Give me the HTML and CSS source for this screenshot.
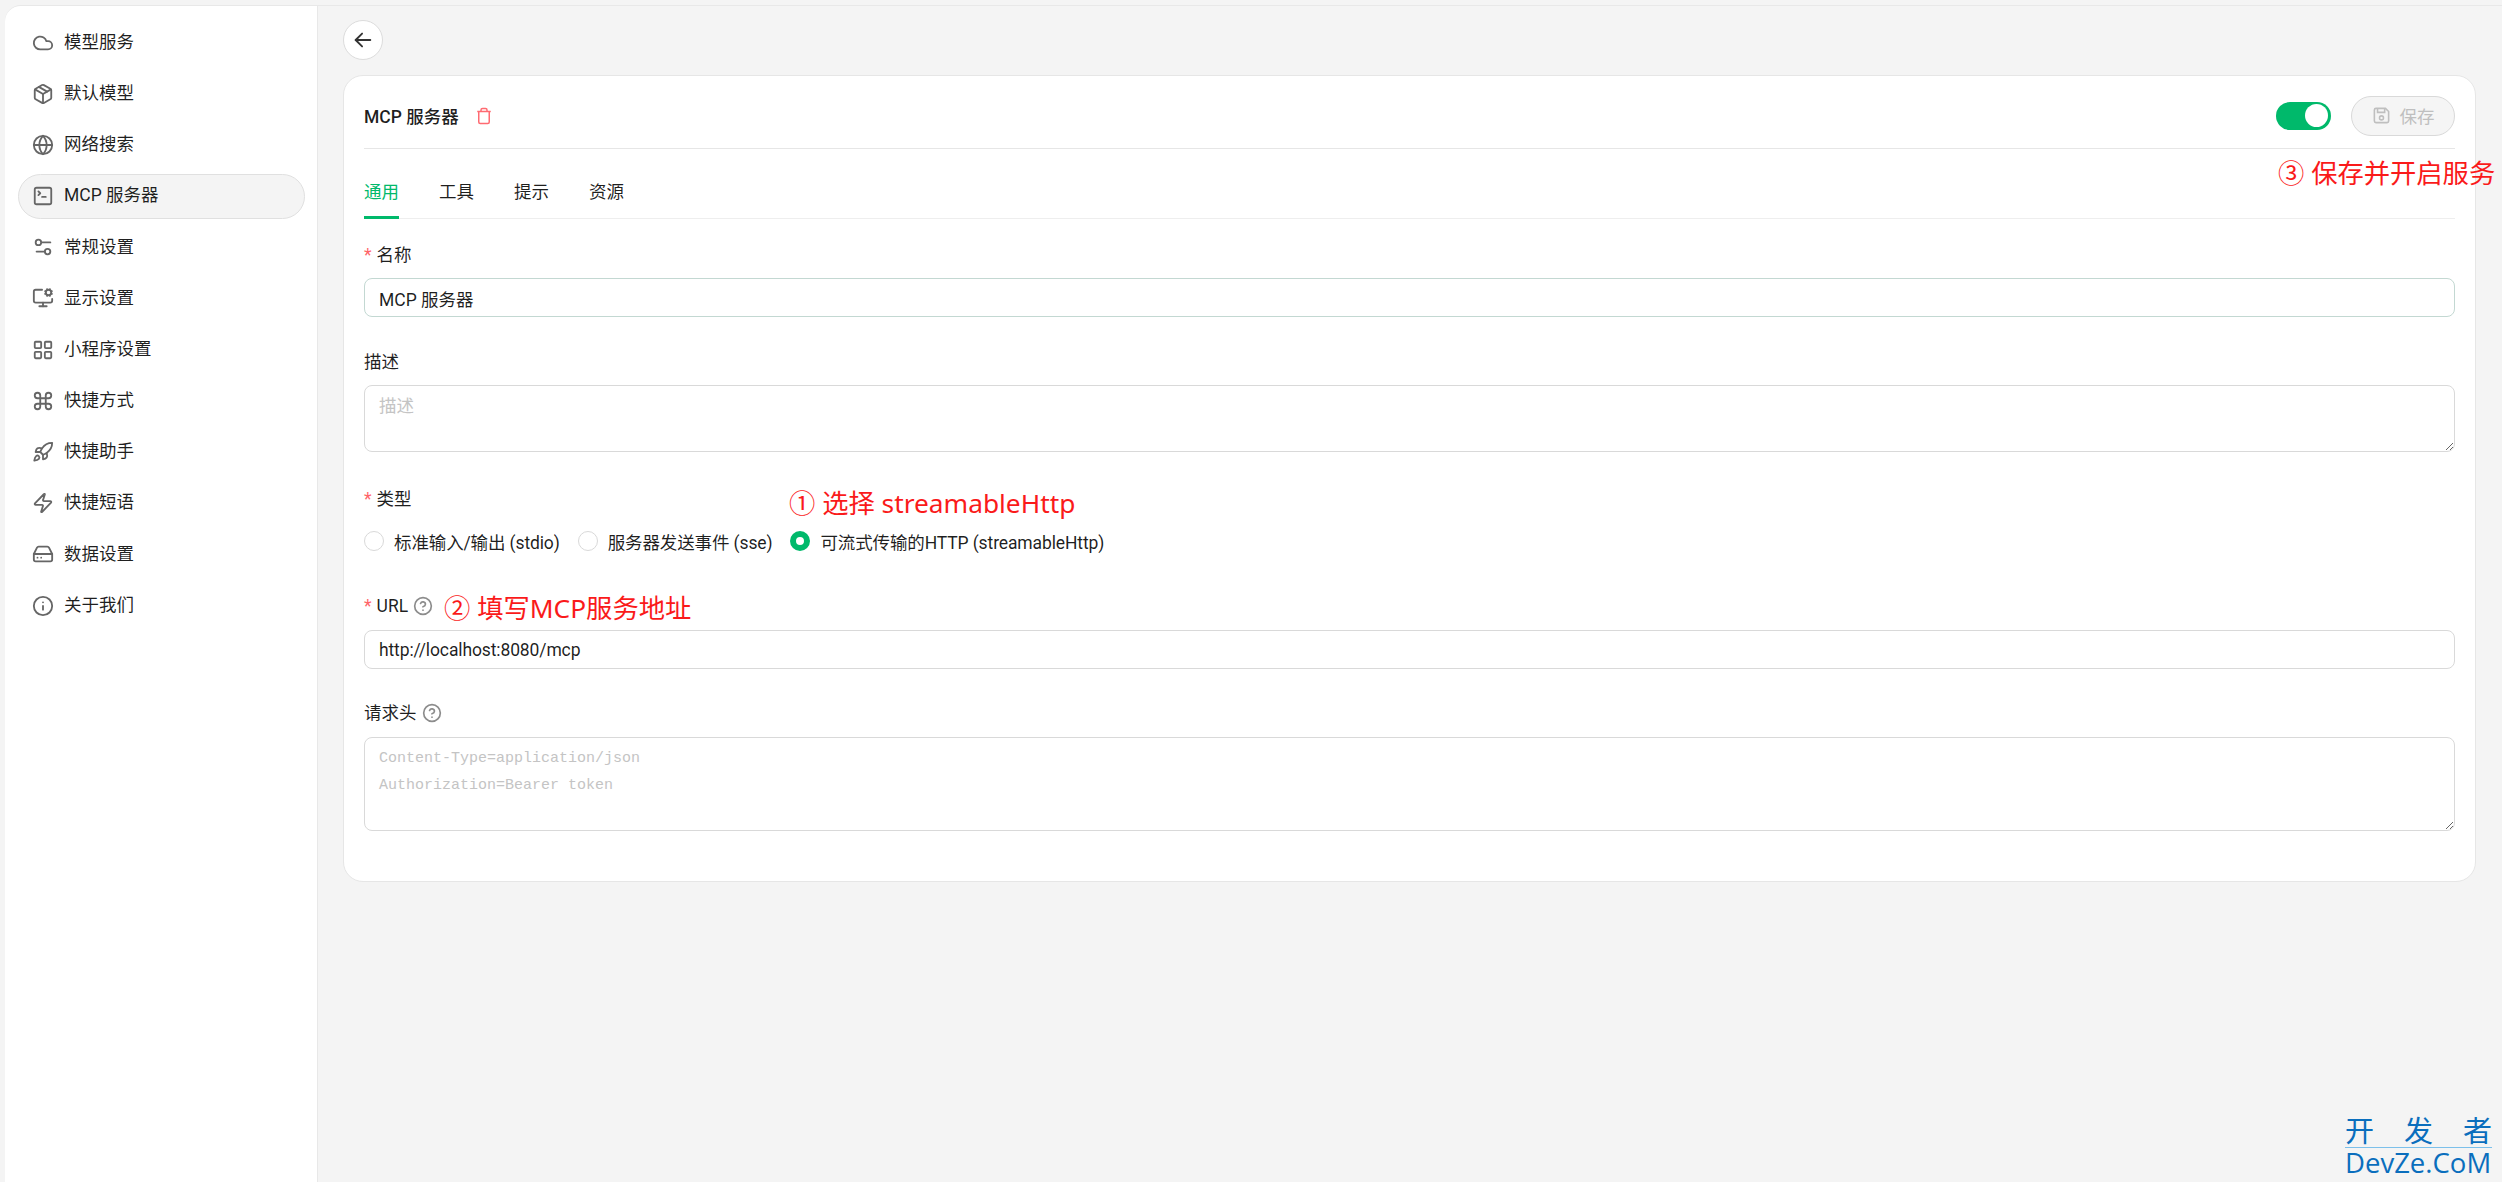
FILE: index.html
```html
<!DOCTYPE html>
<html lang="zh-CN">
<head>
  <meta charset="UTF-8">
  <title>MCP 服务器</title>
  <link rel="stylesheet" href="styles.css">
</head>
<body>
  <div class="app">
    <nav class="sidebar">
      <a class="nav-item"><svg class="icon" viewBox="0 0 24 24"><path d="M17.5 19H9a7 7 0 1 1 6.71-9h1.79a4.5 4.5 0 1 1 0 9Z"/></svg>模型服务</a>
      <a class="nav-item"><svg class="icon" viewBox="0 0 24 24"><path d="M11 21.73a2 2 0 0 0 2 0l7-4A2 2 0 0 0 21 16V8a2 2 0 0 0-1-1.73l-7-4a2 2 0 0 0-2 0l-7 4A2 2 0 0 0 3 8v8a2 2 0 0 0 1 1.73z"/><path d="M12 22V12"/><path d="M3.29 7 12 12l8.71-5"/><path d="m7.5 4.27 9 5.15"/></svg>默认模型</a>
      <a class="nav-item"><svg class="icon" viewBox="0 0 24 24"><circle cx="12" cy="12" r="10"/><path d="M12 2a14.5 14.5 0 0 0 0 20 14.5 14.5 0 0 0 0-20"/><path d="M2 12h20"/></svg>网络搜索</a>
      <a class="nav-item active"><svg class="icon" viewBox="0 0 24 24"><path d="m7 11 2-2-2-2"/><path d="M11 13h4"/><rect x="3" y="3" width="18" height="18" rx="2"/></svg>MCP 服务器</a>
      <a class="nav-item"><svg class="icon" viewBox="0 0 24 24"><path d="M20 7h-9"/><path d="M14 17H5"/><circle cx="17" cy="17" r="3"/><circle cx="7" cy="7" r="3"/></svg>常规设置</a>
      <a class="nav-item"><svg class="icon" viewBox="0 0 24 24"><path d="M12 17v4"/><path d="m14.305 7.53.923-.382"/><path d="m15.228 4.852-.923-.383"/><path d="m16.852 3.228-.383-.924"/><path d="m16.852 8.772-.383.923"/><path d="m19.148 3.228.383-.924"/><path d="m19.53 9.696-.382-.924"/><path d="m20.772 4.852.924-.383"/><path d="m20.772 7.148.924.383"/><path d="M22 13v2a2 2 0 0 1-2 2H4a2 2 0 0 1-2-2V5a2 2 0 0 1 2-2h7"/><path d="M8 21h8"/><circle cx="18" cy="6" r="3"/></svg>显示设置</a>
      <a class="nav-item"><svg class="icon" viewBox="0 0 24 24"><rect x="3" y="3" width="7" height="7" rx="1"/><rect x="14" y="3" width="7" height="7" rx="1"/><rect x="14" y="14" width="7" height="7" rx="1"/><rect x="3" y="14" width="7" height="7" rx="1"/></svg>小程序设置</a>
      <a class="nav-item"><svg class="icon" viewBox="0 0 24 24"><path d="M15 6v12a3 3 0 1 0 3-3H6a3 3 0 1 0 3 3V6a3 3 0 1 0-3 3h12a3 3 0 1 0-3-3"/></svg>快捷方式</a>
      <a class="nav-item"><svg class="icon" viewBox="0 0 24 24"><path d="M4.5 16.5c-1.5 1.26-2 5-2 5s3.74-.5 5-2c.71-.84.7-2.13-.09-2.91a2.18 2.18 0 0 0-2.91-.09z"/><path d="m12 15-3-3a22 22 0 0 1 2-3.95A12.88 12.88 0 0 1 22 2c0 2.72-.78 7.5-6 11a22.35 22.35 0 0 1-4 2z"/><path d="M9 12H4s.55-3.03 2-4c1.62-1.08 5 0 5 0"/><path d="M12 15v5s3.03-.55 4-2c1.08-1.62 0-5 0-5"/></svg>快捷助手</a>
      <a class="nav-item"><svg class="icon" viewBox="0 0 24 24"><path d="M4 14a1 1 0 0 1-.78-1.63l9.9-10.2a.5.5 0 0 1 .86.46l-1.92 6.02A1 1 0 0 0 13 10h7a1 1 0 0 1 .78 1.63l-9.9 10.2a.5.5 0 0 1-.86-.46l1.92-6.02A1 1 0 0 0 11 14z"/></svg>快捷短语</a>
      <a class="nav-item"><svg class="icon" viewBox="0 0 24 24"><path d="M22 12H2"/><path d="M5.45 5.11 2 12v6a2 2 0 0 0 2 2h16a2 2 0 0 0 2-2v-6l-3.45-6.89A2 2 0 0 0 16.76 4H7.24a2 2 0 0 0-1.79 1.11z"/><path d="M6 16h.01"/><path d="M10 16h.01"/></svg>数据设置</a>
      <a class="nav-item"><svg class="icon" viewBox="0 0 24 24"><circle cx="12" cy="12" r="10"/><path d="M12 16v-4"/><path d="M12 8h.01"/></svg>关于我们</a>
    </nav>

    <main class="main">
      <button class="back-btn"><svg class="back-icon" viewBox="0 0 24 24"><path d="M20 12H4"/><path d="M11 19l-7-7 7-7"/></svg></button>

      <section class="card">
        <header class="card-head">
          <div class="title-wrap">
            <span class="title">MCP 服务器</span>
            <svg class="trash" viewBox="0 0 24 24"><path d="M3 6h18"/><path d="M19 6v14c0 1-1 2-2 2H7c-1 0-2-1-2-2V6"/><path d="M8 6V4c0-1 1-2 2-2h4c1 0 2 1 2 2v2"/></svg>
          </div>
          <div class="head-actions">
            <span class="switch"><span class="knob"></span></span>
            <button class="save-btn"><svg class="save-icon" viewBox="0 0 24 24"><path d="M3 5a2 2 0 0 1 2-2h12l4 4v12a2 2 0 0 1-2 2H5a2 2 0 0 1-2-2z"/><path d="M7 3v5h9V3"/><circle cx="12" cy="15" r="2.5"/></svg>保存</button>
          </div>
        </header>

        <div class="tabs">
          <span class="tab active">通用</span>
          <span class="tab">工具</span>
          <span class="tab">提示</span>
          <span class="tab">资源</span>
        </div>

        <form class="form">
          <div class="field">
            <label class="label"><span class="req">*</span>名称</label>
            <input class="input name-input" value="MCP 服务器">
          </div>
          <div class="field field-desc">
            <label class="label">描述</label>
            <textarea class="input desc" placeholder="描述"></textarea>
          </div>
          <div class="field field-type">
            <label class="label"><span class="req">*</span>类型</label>
            <div class="radios">
              <span class="radio"><span class="dot"></span>标准输入/输出 (stdio)</span>
              <span class="radio"><span class="dot"></span>服务器发送事件 (sse)</span>
              <span class="radio"><span class="dot checked"></span>可流式传输的HTTP (streamableHttp)</span>
            </div>
          </div>
          <div class="field field-url">
            <label class="label"><span class="req">*</span>URL<svg class="help" viewBox="0 0 24 24"><circle cx="12" cy="12" r="10"/><path d="M9.09 9a3 3 0 0 1 5.83 1c0 2-3 3-3 3"/><path d="M12 17h.01"/></svg></label>
            <input class="input url-input" value="http://localhost:8080/mcp">
          </div>
          <div class="field field-headers">
            <label class="label">请求头<svg class="help" viewBox="0 0 24 24"><circle cx="12" cy="12" r="10"/><path d="M9.09 9a3 3 0 0 1 5.83 1c0 2-3 3-3 3"/><path d="M12 17h.01"/></svg></label>
            <textarea class="input headers" placeholder="Content-Type=application/json&#10;Authorization=Bearer token"></textarea>
          </div>
        </form>
      </section>
    </main>

    <span class="note note-1">① 选择 streamableHttp</span>
    <span class="note note-2">② 填写MCP服务地址</span>
    <span class="note note-3">③ 保存并开启服务</span>

    <div class="watermark">
      <div class="wm-top"><span>开</span><span>发</span><span>者</span></div>
      <div class="wm-bottom">DevZe.CoM</div>
    </div>
  </div>
</body>
</html>
```

FILE: styles.css
```css
* {
  box-sizing: border-box;
}

html, body {
  height: 100%;
}

body {
  margin: 0;
  background-color: #f4f4f4;
  color: rgba(0, 0, 0, 0.88);
  font-family: "Roboto", "Noto Sans CJK SC", sans-serif;
  font-size: 17.5px;
  overflow: hidden;
}

.app {
  position: relative;
  display: flex;
  height: 100%;
  padding: 5px 0 0 5px;
}

/* left menu */
.sidebar {
  display: flex;
  flex-direction: column;
  flex: 0 0 313px;
  gap: 6.2px;
  padding: 14px 12px 0 13px;
  background-color: #fff;
  border-top: 1px solid #e8e8e8;
  border-right: 1px solid #e8e8e8;
  border-top-left-radius: 16px;
}

.nav-item {
  display: flex;
  align-items: center;
  gap: 10px;
  height: 45px;
  padding-left: 13px;
  border: 1px solid transparent;
  border-radius: 23px;
  line-height: 1;
}

.nav-item.active {
  background-color: #f4f4f4;
  border-color: #e0e0e0;
}

.icon {
  width: 22px;
  height: 22px;
  fill: none;
  stroke: #666;
  stroke-width: 2;
  stroke-linecap: round;
  stroke-linejoin: round;
}

/* content */
.main {
  flex: 1;
  padding: 14px 26px 0 25px;
  border-top: 1px solid #e8e8e8;
}

.back-btn {
  display: flex;
  align-items: center;
  justify-content: center;
  width: 40px;
  height: 40px;
  padding: 0;
  background-color: #fff;
  border: 1px solid #dcdcdc;
  border-radius: 50%;
}

.back-icon {
  width: 22px;
  height: 22px;
  fill: none;
  stroke: #333;
  stroke-width: 2;
  stroke-linecap: round;
  stroke-linejoin: round;
}

.card {
  height: 807px;
  margin-top: 15px;
  padding: 20px 20px 0;
  background-color: #fff;
  border: 1px solid #e6e6e6;
  border-radius: 20px;
}

.card-head {
  display: flex;
  align-items: center;
  justify-content: space-between;
  height: 53px;
  padding-bottom: 13px;
  border-bottom: 1px solid #e6e6e6;
}

.title-wrap {
  display: flex;
  align-items: center;
  gap: 16px;
}

.title {
  font-weight: 500;
}

.trash {
  width: 18px;
  height: 18px;
  fill: none;
  stroke: #ff6b72;
  stroke-width: 2;
}

.head-actions {
  display: flex;
  align-items: center;
  gap: 20px;
}

.switch {
  display: flex;
  justify-content: flex-end;
  align-items: center;
  width: 55px;
  height: 28px;
  padding-right: 3px;
  background-color: #00b96b;
  border-radius: 14px;
}

.knob {
  width: 23px;
  height: 23px;
  background-color: #fff;
  border-radius: 50%;
}

.save-btn {
  display: flex;
  align-items: center;
  justify-content: center;
  gap: 9px;
  width: 104px;
  height: 40px;
  padding: 0;
  background-color: #f5f5f5;
  border: 1px solid #d9d9d9;
  border-radius: 20px;
  color: #bfbfbf;
  font: inherit;
}

.save-icon {
  width: 19px;
  height: 19px;
  fill: none;
  stroke: #bfbfbf;
  stroke-width: 2;
}

.tabs {
  display: flex;
  gap: 40px;
  height: 70px;
  border-bottom: 1px solid #eee;
}

.tab {
  display: flex;
  align-items: center;
  height: 70px;
  padding-top: 15px;
  border-bottom: 3px solid transparent;
}

.tab.active {
  color: #00b96b;
  border-bottom-color: #00b96b;
}

.form {
  padding-top: 24px;
}

.field {
  margin-bottom: 33px;
}

.field-desc {
  margin-bottom: 35px;
}

.field-type {
  margin-bottom: 40px;
}

.field-url {
  margin-bottom: 32px;
}

.field-url .label,
.field-headers .label {
  margin-bottom: 12px;
}

.label {
  display: flex;
  align-items: center;
  height: 24px;
  margin-bottom: 11px;
  line-height: 24px;
}

.req {
  margin-right: 5px;
  color: #ff6468;
}

.help {
  width: 20px;
  height: 20px;
  margin-left: 5px;
  fill: none;
  stroke: #8c8c8c;
  stroke-width: 2;
  stroke-linecap: round;
}

.input {
  display: block;
  width: 100%;
  height: 39px;
  padding: 0 14px;
  background-color: #fff;
  border: 1px solid #d9d9d9;
  border-radius: 8px;
  color: rgba(0, 0, 0, 0.88);
  font: inherit;
  outline: none;
}

.input::placeholder {
  color: #c4c4c4;
}

.name-input {
  padding-top: 2px;
  border-color: #c3d8d2;
}

.url-input {
  letter-spacing: -0.12px;
}

.desc {
  height: 67px;
  padding-top: 6px;
  resize: vertical;
}

.headers {
  height: 94px;
  padding-top: 7px;
  font-family: "Liberation Mono", monospace;
  font-size: 15px;
  line-height: 27px;
  resize: vertical;
}

.radios {
  display: flex;
  align-items: center;
  gap: 18px;
  height: 26px;
  margin-top: 17px;
  letter-spacing: -0.12px;
}

.radio {
  display: flex;
  align-items: center;
  gap: 10px;
}

.dot {
  width: 20px;
  height: 20px;
  background-color: #fff;
  border: 1px solid #d9d9d9;
  border-radius: 50%;
}

.dot.checked {
  border: 6px solid #00b96b;
}

/* red notes drawn over the screenshot */
.note {
  position: absolute;
  color: #fa1a1a;
  font-family: "Noto Sans", "Noto Sans CJK SC", sans-serif;
  font-size: 26.3px;
  line-height: 34px;
  white-space: nowrap;
}

.note-1 {
  left: 789px;
  top: 486px;
}

.note-2 {
  left: 444px;
  top: 591px;
}

.note-3 {
  left: 2278px;
  top: 156px;
}

.watermark {
  position: absolute;
  left: 2345px;
  top: 1117px;
  width: 147px;
  color: #0a6ebd;
}

.wm-top {
  display: flex;
  justify-content: space-between;
  height: 31px;
  border-bottom: 1px solid #7cc0ea;
  font-size: 29px;
  line-height: 30px;
}

.wm-bottom {
  font-family: "Open Sans", sans-serif;
  font-size: 27.5px;
  line-height: 30px;
  white-space: nowrap;
}
```
